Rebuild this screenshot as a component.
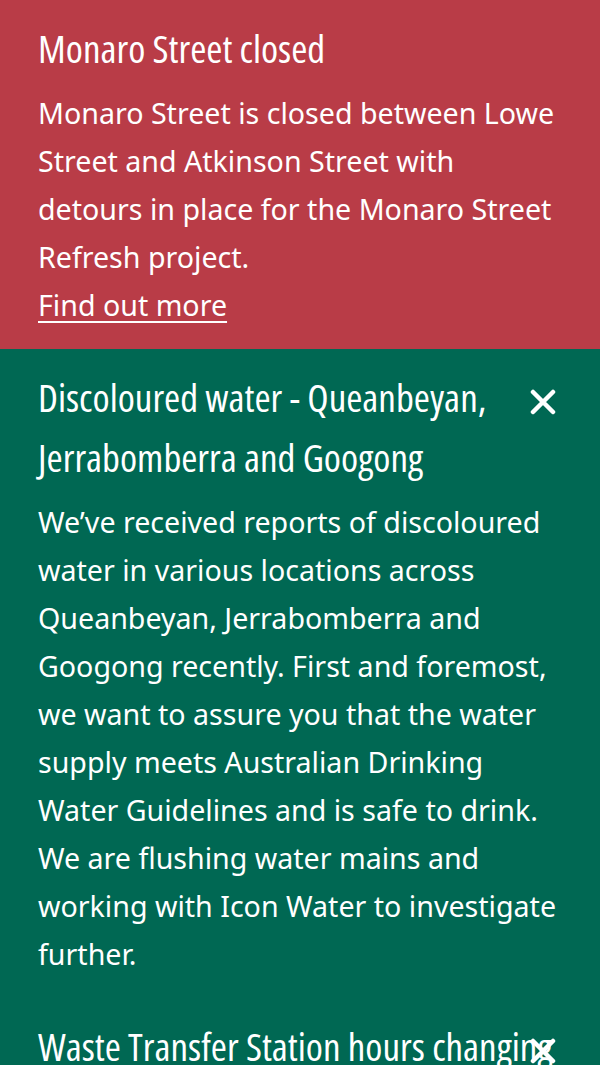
import type { ReactNode } from "react";

function CloseIcon() {
  return (
    <svg width="26" height="26" viewBox="0 0 26 26" aria-hidden="true">
      <path d="M3 3 L23 23 M23 3 L3 23" stroke="white" strokeWidth="4.5" strokeLinecap="round" />
    </svg>
  );
}

type AlertProps = {
  title: string;
  bg: string;
  closable?: boolean;
  nowrap?: boolean;
  children?: ReactNode;
};

function Alert({ title, bg, closable, nowrap, children }: AlertProps) {
  return (
    <section className={`relative pl-[38px] pr-[40px] pt-[18px] pb-[20px] ${bg}`}>
      <h2
        className={`font-['Open_Sans',sans-serif] font-stretch-75% text-[39px] leading-[60px] text-white font-medium ${
          closable ? "pr-[60px]" : ""
        } ${nowrap ? "whitespace-nowrap" : ""}`}
      >
        {title}
      </h2>
      {closable && (
        <button className="absolute right-[44px] top-[40px] cursor-pointer">
          <CloseIcon />
        </button>
      )}
      {children && <div className="mt-[11px]">{children}</div>}
    </section>
  );
}

export default function App() {
  return (
    <div className="w-[600px] h-[1065px] overflow-hidden bg-[#006853] text-white font-['Noto_Sans','Open_Sans',sans-serif]">
      <Alert title="Monaro Street closed" bg="bg-[#b93c47]">
        <p className="text-[28.6px] leading-[48px]">
          Monaro Street is closed between Lowe Street and Atkinson Street with detours in place for the
          Monaro Street Refresh project.
        </p>
        <a href="#" className="text-[28.6px] leading-[48px] underline underline-offset-[5px] decoration-2">
          Find out more
        </a>
      </Alert>

      <Alert title="Discoloured water - Queanbeyan, Jerrabomberra and Googong" bg="bg-[#006853]" closable>
        <p className="text-[28.6px] leading-[48px]">
          We’ve received reports of discoloured water in various locations across Queanbeyan,
          Jerrabomberra and Googong recently. First and foremost, we want to assure you that the water
          supply meets Australian Drinking Water Guidelines and is safe to drink. We are flushing water
          mains and working with Icon Water to investigate further.
        </p>
      </Alert>

      <Alert title="Waste Transfer Station hours changing" bg="bg-[#006853]" closable nowrap />
    </div>
  );
}
